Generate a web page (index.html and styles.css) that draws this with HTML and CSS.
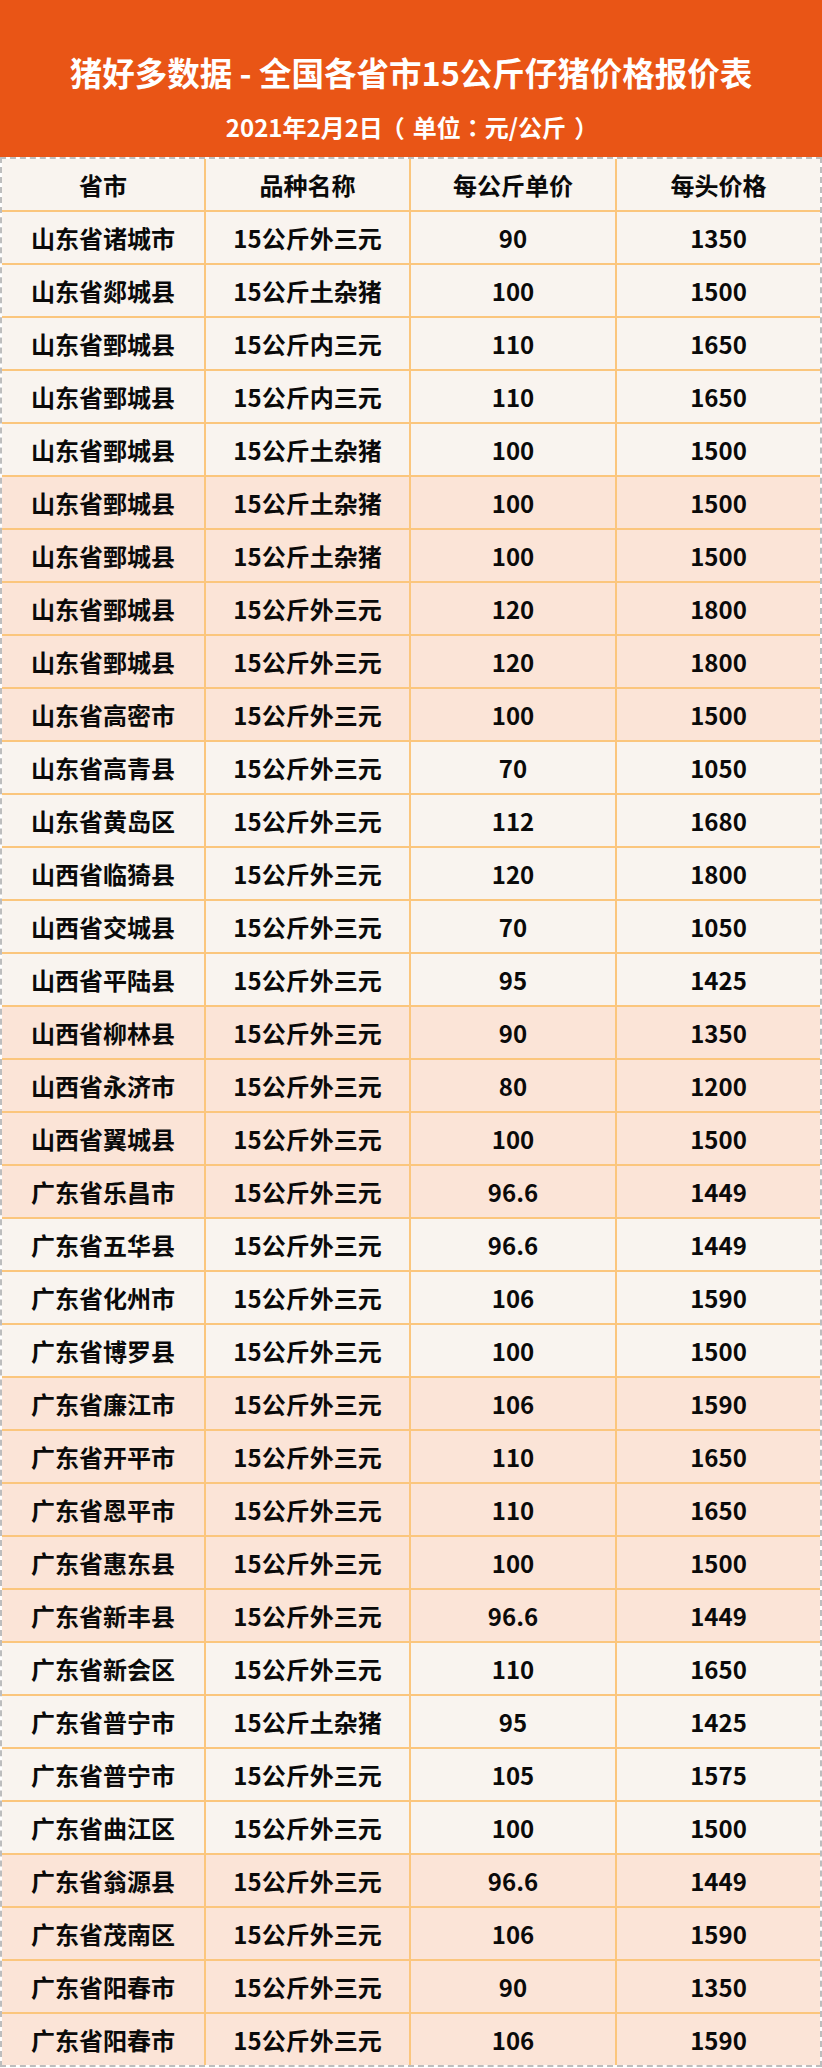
FILE: index.html
```html
<!DOCTYPE html>
<html lang="zh-CN">
<head>
<meta charset="utf-8">
<title>猪好多数据 - 全国各省市15公斤仔猪价格报价表</title>
<link rel="stylesheet" href="styles.css">
</head>
<body>
<div class="page">
  <header class="banner">
    <h1 class="title">猪好多数据 - 全国各省市15公斤仔猪价格报价表</h1>
    <p class="subtitle">2021年2月2日<span class="punct open" lang="zh-Hant">（</span>单位<span class="punct" lang="zh-Hant">：</span>元/公斤<span class="punct close" lang="zh-Hant">）</span></p>
  </header>
  <div class="sheet">
    <div class="row head"><div class="cell">省市</div><div class="cell">品种名称</div><div class="cell">每公斤单价</div><div class="cell">每头价格</div></div>
    <div class="row"><div class="cell">山东省诸城市</div><div class="cell">15公斤外三元</div><div class="cell">90</div><div class="cell">1350</div></div>
    <div class="row"><div class="cell">山东省郯城县</div><div class="cell">15公斤土杂猪</div><div class="cell">100</div><div class="cell">1500</div></div>
    <div class="row"><div class="cell">山东省鄄城县</div><div class="cell">15公斤内三元</div><div class="cell">110</div><div class="cell">1650</div></div>
    <div class="row"><div class="cell">山东省鄄城县</div><div class="cell">15公斤内三元</div><div class="cell">110</div><div class="cell">1650</div></div>
    <div class="row"><div class="cell">山东省鄄城县</div><div class="cell">15公斤土杂猪</div><div class="cell">100</div><div class="cell">1500</div></div>
    <div class="row alt"><div class="cell">山东省鄄城县</div><div class="cell">15公斤土杂猪</div><div class="cell">100</div><div class="cell">1500</div></div>
    <div class="row alt"><div class="cell">山东省鄄城县</div><div class="cell">15公斤土杂猪</div><div class="cell">100</div><div class="cell">1500</div></div>
    <div class="row alt"><div class="cell">山东省鄄城县</div><div class="cell">15公斤外三元</div><div class="cell">120</div><div class="cell">1800</div></div>
    <div class="row alt"><div class="cell">山东省鄄城县</div><div class="cell">15公斤外三元</div><div class="cell">120</div><div class="cell">1800</div></div>
    <div class="row alt"><div class="cell">山东省高密市</div><div class="cell">15公斤外三元</div><div class="cell">100</div><div class="cell">1500</div></div>
    <div class="row"><div class="cell">山东省高青县</div><div class="cell">15公斤外三元</div><div class="cell">70</div><div class="cell">1050</div></div>
    <div class="row"><div class="cell">山东省黄岛区</div><div class="cell">15公斤外三元</div><div class="cell">112</div><div class="cell">1680</div></div>
    <div class="row"><div class="cell">山西省临猗县</div><div class="cell">15公斤外三元</div><div class="cell">120</div><div class="cell">1800</div></div>
    <div class="row"><div class="cell">山西省交城县</div><div class="cell">15公斤外三元</div><div class="cell">70</div><div class="cell">1050</div></div>
    <div class="row"><div class="cell">山西省平陆县</div><div class="cell">15公斤外三元</div><div class="cell">95</div><div class="cell">1425</div></div>
    <div class="row alt"><div class="cell">山西省柳林县</div><div class="cell">15公斤外三元</div><div class="cell">90</div><div class="cell">1350</div></div>
    <div class="row alt"><div class="cell">山西省永济市</div><div class="cell">15公斤外三元</div><div class="cell">80</div><div class="cell">1200</div></div>
    <div class="row alt"><div class="cell">山西省翼城县</div><div class="cell">15公斤外三元</div><div class="cell">100</div><div class="cell">1500</div></div>
    <div class="row alt"><div class="cell">广东省乐昌市</div><div class="cell">15公斤外三元</div><div class="cell">96.6</div><div class="cell">1449</div></div>
    <div class="row"><div class="cell">广东省五华县</div><div class="cell">15公斤外三元</div><div class="cell">96.6</div><div class="cell">1449</div></div>
    <div class="row"><div class="cell">广东省化州市</div><div class="cell">15公斤外三元</div><div class="cell">106</div><div class="cell">1590</div></div>
    <div class="row"><div class="cell">广东省博罗县</div><div class="cell">15公斤外三元</div><div class="cell">100</div><div class="cell">1500</div></div>
    <div class="row alt"><div class="cell">广东省廉江市</div><div class="cell">15公斤外三元</div><div class="cell">106</div><div class="cell">1590</div></div>
    <div class="row alt"><div class="cell">广东省开平市</div><div class="cell">15公斤外三元</div><div class="cell">110</div><div class="cell">1650</div></div>
    <div class="row alt"><div class="cell">广东省恩平市</div><div class="cell">15公斤外三元</div><div class="cell">110</div><div class="cell">1650</div></div>
    <div class="row alt"><div class="cell">广东省惠东县</div><div class="cell">15公斤外三元</div><div class="cell">100</div><div class="cell">1500</div></div>
    <div class="row alt"><div class="cell">广东省新丰县</div><div class="cell">15公斤外三元</div><div class="cell">96.6</div><div class="cell">1449</div></div>
    <div class="row"><div class="cell">广东省新会区</div><div class="cell">15公斤外三元</div><div class="cell">110</div><div class="cell">1650</div></div>
    <div class="row"><div class="cell">广东省普宁市</div><div class="cell">15公斤土杂猪</div><div class="cell">95</div><div class="cell">1425</div></div>
    <div class="row"><div class="cell">广东省普宁市</div><div class="cell">15公斤外三元</div><div class="cell">105</div><div class="cell">1575</div></div>
    <div class="row"><div class="cell">广东省曲江区</div><div class="cell">15公斤外三元</div><div class="cell">100</div><div class="cell">1500</div></div>
    <div class="row alt"><div class="cell">广东省翁源县</div><div class="cell">15公斤外三元</div><div class="cell">96.6</div><div class="cell">1449</div></div>
    <div class="row alt"><div class="cell">广东省茂南区</div><div class="cell">15公斤外三元</div><div class="cell">106</div><div class="cell">1590</div></div>
    <div class="row alt"><div class="cell">广东省阳春市</div><div class="cell">15公斤外三元</div><div class="cell">90</div><div class="cell">1350</div></div>
    <div class="row alt last"><div class="cell">广东省阳春市</div><div class="cell">15公斤外三元</div><div class="cell">106</div><div class="cell">1590</div></div>
  </div>
</div>
</body>
</html>
```
FILE: styles.css
```css
* { box-sizing: border-box; }
html, body { margin: 0; padding: 0; background: #ffffff; }
body {
  font-family: "Noto Sans CJK SC", "Noto Sans", "Liberation Sans", sans-serif;
  font-weight: 700;
  color: #0a0a0a;
}
.page { width: 822px; }
.banner {
  height: 157px;
  background: #e95516;
  color: #ffffff;
  display: flex;
  flex-direction: column;
  align-items: center;
  padding-top: 52px;
}
.title {
  margin: 0;
  font-size: 32.5px;
  line-height: 40px;
  font-weight: 700;
  white-space: nowrap;
}
.subtitle {
  margin: 20px 0 0;
  font-size: 24px;
  line-height: 30px;
  font-weight: 700;
  white-space: nowrap;
  text-spacing-trim: space-all;
}
.punct {
  font-family: "Noto Sans CJK TC", "Noto Sans CJK SC", sans-serif;
}
.open { margin: 0 8px 0 -2px; }
.close { margin: 0 -2px 0 8px; }
.sheet {
  border-left: 2px dashed #bdbdbd;
  border-right: 2px dashed #bdbdbd;
  border-top: 2px dashed #bdbdbd;
  border-bottom: 2px dashed #bdbdbd;
}
.row {
  display: grid;
  grid-template-columns: 204px 205px 206px 203px;
  height: 53px;
  background: #f9f4ef;
  border-bottom: 2px solid #fbc67d;
}
.row.alt { background: #fbe4d7; }
.row.last { border-bottom: none; height: 51px; }
.cell {
  display: flex;
  align-items: center;
  justify-content: center;
  font-size: 24px;
  line-height: 1;
  white-space: nowrap;
  border-right: 2px solid #fbc67d;
}
.cell:last-child { border-right: none; }
```
